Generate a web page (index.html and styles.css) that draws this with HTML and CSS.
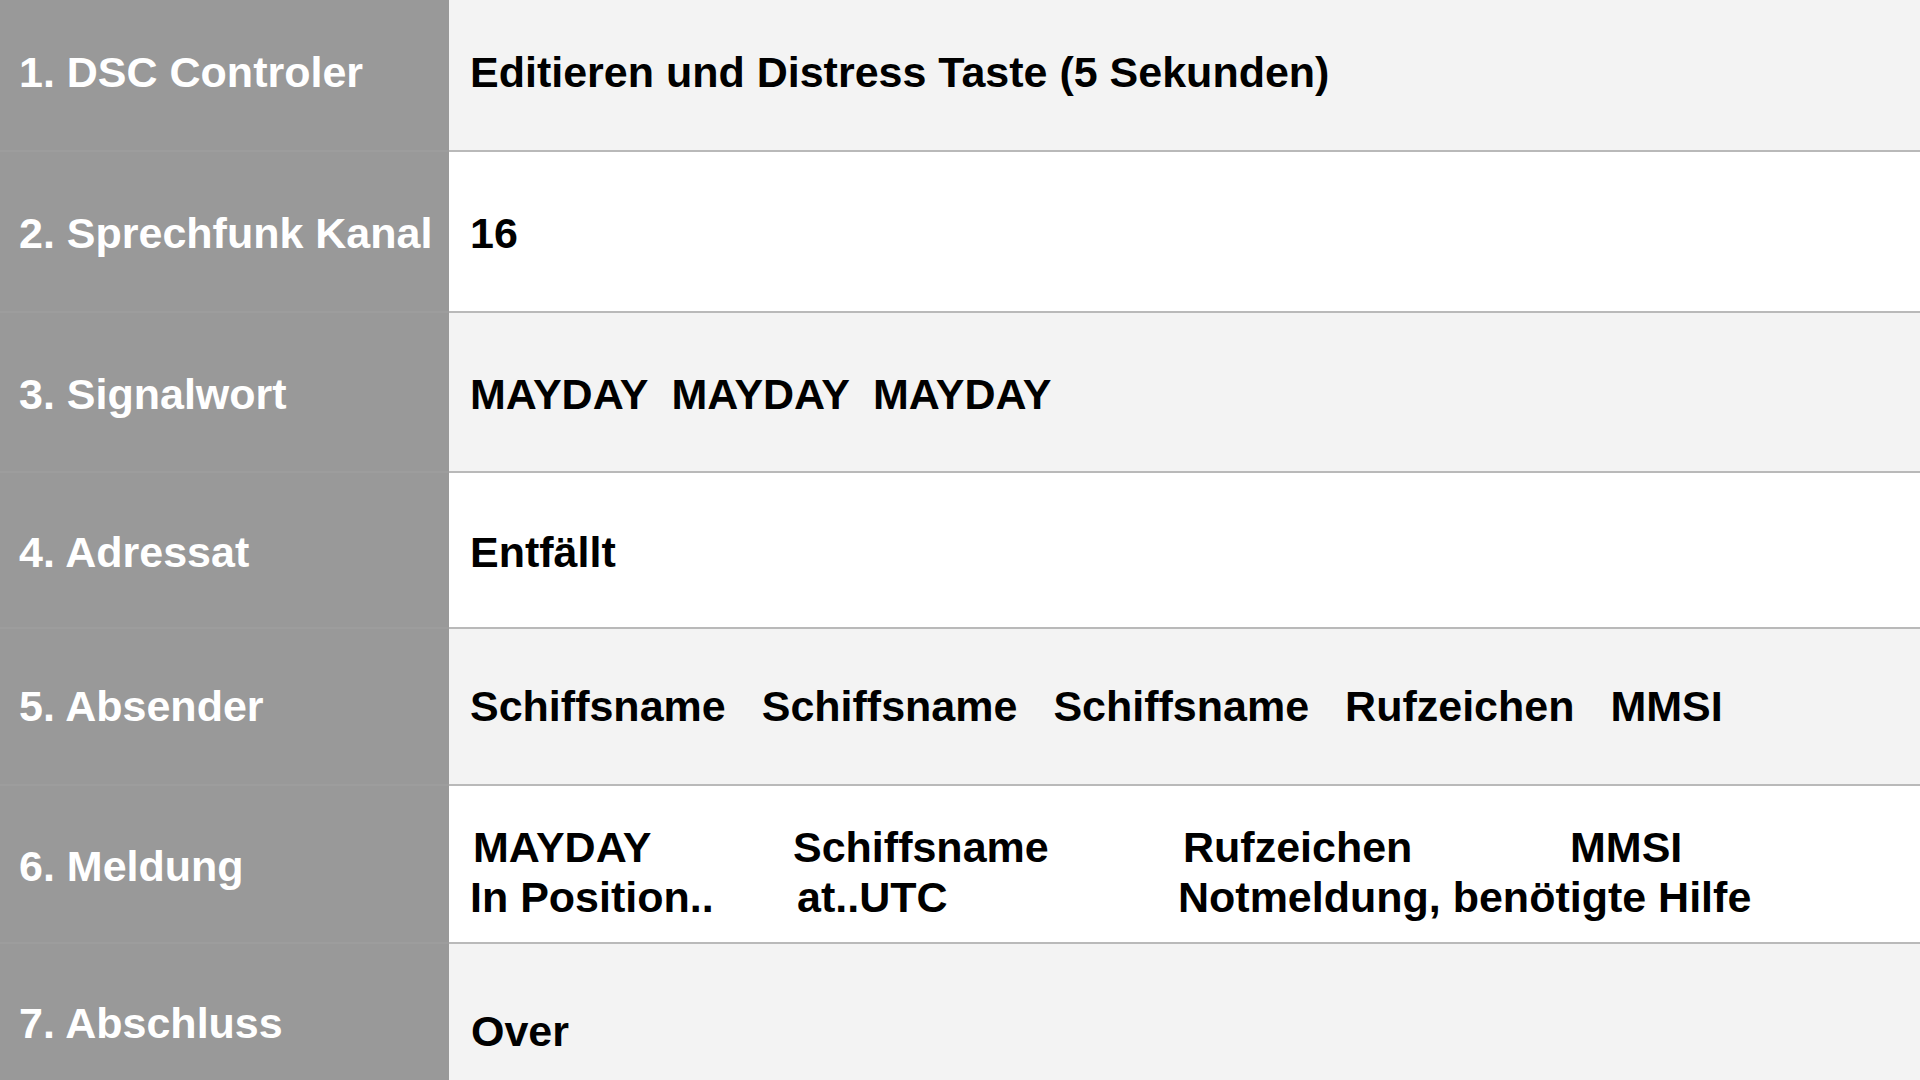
FILE: index.html
```html
<!DOCTYPE html>
<html lang="de">
<head>
<meta charset="utf-8">
<title>DSC Notruf</title>
<link rel="stylesheet" href="styles.css">
</head>
<body>
<div class="table">
  <div class="row r1 odd">
    <div class="label">1. DSC Controler</div>
    <div class="value">Editieren und Distress Taste (5 Sekunden)</div>
  </div>
  <div class="row r2 even">
    <div class="label">2. Sprechfunk Kanal</div>
    <div class="value">16</div>
  </div>
  <div class="row r3 odd">
    <div class="label">3. Signalwort</div>
    <div class="value words tight"><span>MAYDAY</span><span>MAYDAY</span><span>MAYDAY</span></div>
  </div>
  <div class="row r4 even">
    <div class="label">4. Adressat</div>
    <div class="value">Entfällt</div>
  </div>
  <div class="row r5 odd">
    <div class="label">5. Absender</div>
    <div class="value words wide"><span>Schiffsname</span><span>Schiffsname</span><span>Schiffsname</span><span>Rufzeichen</span><span>MMSI</span></div>
  </div>
  <div class="row r6 even">
    <div class="label">6. Meldung</div>
    <div class="value multi">
      <div class="line l1"><span class="c1">MAYDAY</span><span class="c2">Schiffsname</span><span class="c3">Rufzeichen</span><span class="c4">MMSI</span></div>
      <div class="line l2"><span class="c1">In Position..</span><span class="c2">at..UTC</span><span class="c3">Notmeldung, benötigte Hilfe</span></div>
    </div>
  </div>
  <div class="row r7 odd">
    <div class="label">7. Abschluss</div>
    <div class="value over">Over</div>
  </div>
</div>
</body>
</html>
```
FILE: styles.css
```css
html, body {
  margin: 0;
  padding: 0;
  height: 100%;
  overflow: hidden;
  background: #f3f3f3;
}

body {
  font-family: "Liberation Sans", Arial, Helvetica, sans-serif;
  font-weight: bold;
  font-size: 43px;
  color: #000;
}

.table {
  display: flex;
  flex-direction: column;
  height: 1080px;
}

.row {
  display: grid;
  grid-template-columns: 449px 1fr;
  box-sizing: border-box;
  flex-shrink: 0;
}

.r1 { height: 150px; }
.r2 { height: 161px; }
.r3 { height: 160px; }
.r4 { height: 156px; }
.r5 { height: 157px; }
.r6 { height: 158px; }
.r7 { height: 160px; }

.label {
  background: #999999;
  color: #ffffff;
  display: flex;
  align-items: center;
  padding-left: 19px;
  white-space: nowrap;
  box-sizing: border-box;
  border-top: 2px solid #9d9d9d;
}

.r1 .label { border-top: none; padding-bottom: 6px; }

.value {
  display: flex;
  align-items: center;
  padding-left: 21px;
  white-space: nowrap;
  box-sizing: border-box;
  border-top: 2px solid #b9b9b9;
}

.r1 .value { border-top: none; padding-bottom: 6px; }

.r2 .label, .r2 .value,
.r3 .label, .r3 .value,
.r4 .label, .r4 .value,
.r6 .label { padding-top: 4px; }

.odd .value { background: #f3f3f3; }
.even .value { background: #ffffff; }

.words.tight { gap: 23px; }
.words.wide { gap: 36px; }

.multi {
  flex-direction: column;
  align-items: flex-start;
  justify-content: center;
  line-height: 50px;
}

.r6 .multi { padding-top: 16px; }

.line { display: flex; }

.l1 .c1 { width: 320px; margin-left: 3px; }
.l1 .c2 { width: 390px; }
.l1 .c3 { width: 387px; }

.l2 .c1 { width: 327px; }
.l2 .c2 { width: 381px; }

.r7 .over {
  padding-top: 16px;
  padding-left: 22px;
}
```
